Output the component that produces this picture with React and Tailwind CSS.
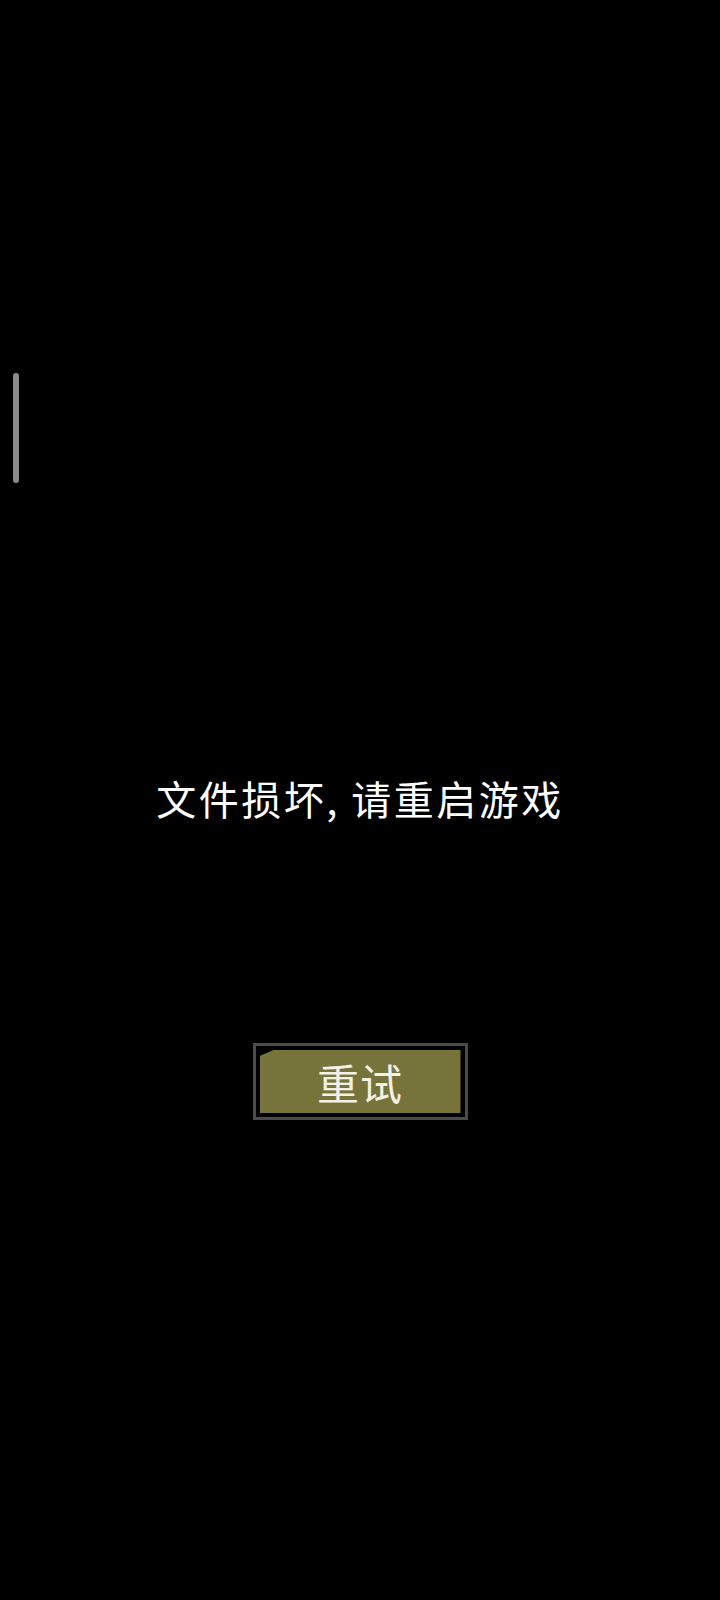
export default function App() {
  return (
    <div
      className="relative w-full h-[1600px] bg-black overflow-hidden"
      style={{ fontFamily: '"Noto Sans CJK SC", "Noto Sans", sans-serif' }}
    >
      <div className="absolute left-[13px] top-[373px] w-[6px] h-[110px] rounded-full bg-[#8a8a8a]" />
      <div className="flex flex-col items-center pt-[774px]">
        <div className="text-[40px] leading-[48px] tracking-[2.5px] text-white whitespace-nowrap">
          文件损坏, 请重启游戏
        </div>
        <div className="mt-[221px] border-[3px] border-[#4b4b4b] bg-black p-[4px]">
          <div className="w-[201px] h-[63px] bg-[#77743b] flex items-center justify-center [clip-path:polygon(14px_0,100%_0,100%_100%,0_100%,0_6px)]">
            <span className="text-[42px] leading-none tracking-[1px] text-[#f3f1e6]">重试</span>
          </div>
        </div>
      </div>
    </div>
  );
}
